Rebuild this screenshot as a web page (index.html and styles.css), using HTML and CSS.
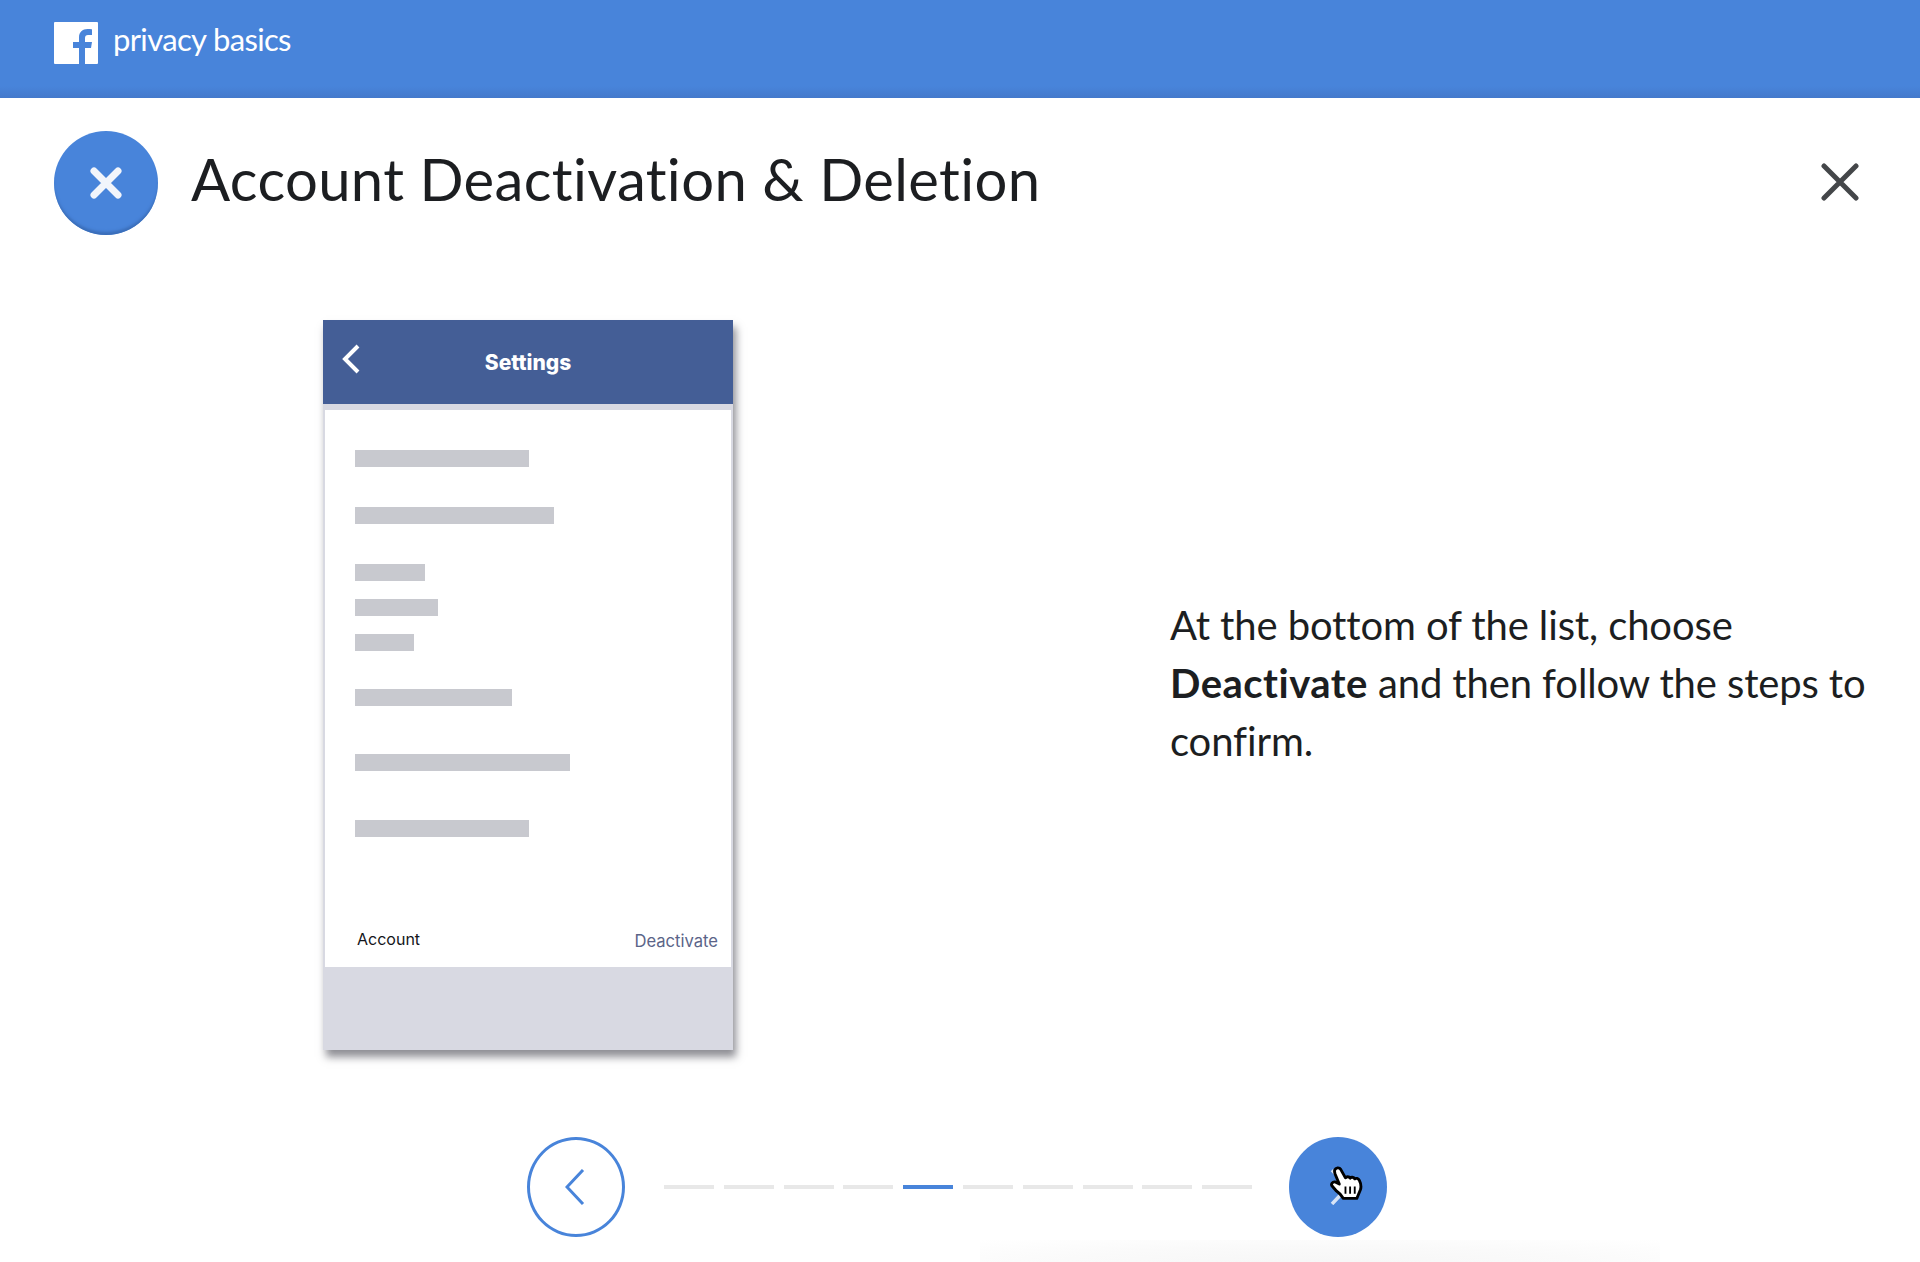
FILE: index.html
```html
<!DOCTYPE html>
<html lang="en">
<head>
<meta charset="utf-8">
<title>Privacy Basics</title>
<link rel="stylesheet" href="styles.css">
</head>
<body>
<div class="page">
  <header class="topbar">
    <svg class="logo" viewBox="0 0 44 42" aria-hidden="true"><path fill="#fff" fill-rule="evenodd" d="M1 0h42a1 1 0 0 1 1 1v40a1 1 0 0 1-1 1H1a1 1 0 0 1-1-1V1a1 1 0 0 1 1-1zM31 42V26h6l1-6h-7v-4c0-2 1-3 3-3h4V7.300c-1-.1-2.500-.3-4.500-.3-5 0-8.500 3-8.500 8.500V20h-6v6h6v16z"/></svg>
    <span class="brand">privacy basics</span>
  </header>

  <section class="title-row">
    <div class="badge">
      <svg class="badge-x" viewBox="0 0 34 34" aria-hidden="true"><path d="M5 5l24 24M29 5L5 29"/></svg>
    </div>
    <h1 class="title">Account Deactivation &amp; Deletion</h1>
    <svg class="close" viewBox="0 0 38 38" aria-hidden="true"><path d="M3 3l32 32M35 3L3 35"/></svg>
  </section>

  <main class="stage">
    <div class="phone">
      <div class="phone-head">
        <svg class="phone-back" viewBox="0 0 18 30" aria-hidden="true"><path d="M16 2L3 15l13 13"/></svg>
        <span class="phone-title">Settings</span>
      </div>
      <div class="phone-body">
        <div class="bar bar-a"></div>
        <div class="bar bar-b"></div>
        <div class="bar bar-c"></div>
        <div class="bar bar-d"></div>
        <div class="bar bar-e"></div>
        <div class="bar bar-f"></div>
        <div class="bar bar-g"></div>
        <div class="bar bar-h"></div>
        <div class="phone-row">
          <span class="row-label">Account</span>
          <span class="row-action">Deactivate</span>
        </div>
      </div>
      <div class="phone-foot"></div>
    </div>
    <p class="copy">At the bottom of the list, choose<br><strong>Deactivate</strong> and then follow the steps to<br>confirm.</p>
  </main>

  <nav class="pager">
    <button class="round round-prev" type="button" aria-label="Previous">
      <svg class="chev" viewBox="0 0 20 36" aria-hidden="true"><path d="M18 1L2 18l16 17"/></svg>
    </button>
    <div class="dashes">
      <span class="dash"></span><span class="dash"></span><span class="dash"></span><span class="dash"></span>
      <span class="dash dash-on"></span>
      <span class="dash"></span><span class="dash"></span><span class="dash"></span><span class="dash"></span><span class="dash"></span>
    </div>
    <button class="round round-next" type="button" aria-label="Next">
      <svg class="chev chev-next" viewBox="0 0 20 36" aria-hidden="true"><path d="M2 1l16 17L2 35"/></svg>
      <svg class="hand" viewBox="0 0 32 34" aria-hidden="true">
        <path class="hand-fill" d="M4.500 4C5.500 1.500 9 1 10.500 3.500L15 11.500C16 10 18.500 10 19.500 11.800C20.500 10.500 23 10.500 24 12.500C25 11.500 27.500 12 28.500 14C30 17 30.500 20 29.500 23L26 31.500H13C11.500 29 9 26 6 24L2 19.500C.5 17.500 2.500 15 5 15.500L9 17.500L5 8C4.500 6.500 4.200 5 4.500 4z"/>
        <path class="hand-lines" d="M15 20v7M19.500 20v7M24 20v7"/>
      </svg>
    </button>
  </nav>
  <div class="floor-shade"></div>
</div>
</body>
</html>
```

FILE: styles.css
```css
* { box-sizing: border-box; }
html, body { margin: 0; padding: 0; background: #fff; }
.page {
  position: relative;
  width: 1920px;
  height: 1262px;
  overflow: hidden;
  background: #fff;
  color: #1c1e21;
  font-family: Lato, "Open Sans", sans-serif;
  font-variant-ligatures: none;
}

.topbar {
  height: 98px;
  background: linear-gradient(#4884da 0, #4884da 88%, #4479cb 100%);
  display: flex;
  align-items: flex-start;
  padding: 22px 0 0 54px;
}
.logo { width: 44px; height: 42px; display: block; }
.brand {
  margin-left: 15px;
  margin-top: -3px;
  color: #fff;
  font-size: 31px;
  line-height: 40px;
  letter-spacing: -0.65px;
}

.title-row {
  display: flex;
  align-items: center;
  height: 104px;
  margin-top: 33px;
  padding: 0 61px 0 54px;
}
.badge {
  width: 104px;
  height: 104px;
  border-radius: 50%;
  background: #4884da;
  box-shadow: inset 0 -4px 3px -1px #3a6db8;
  display: flex;
  align-items: center;
  justify-content: center;
  flex: none;
}
.badge-x { width: 34px; height: 34px; margin-bottom: 1px; }
.badge-x path { fill: none; stroke: #f2f5fb; stroke-width: 7px; stroke-linecap: round; }
.title {
  flex: 1;
  margin: -9px 0 0 33px;
  font-size: 58px;
  line-height: 70px;
  font-weight: 400;
  letter-spacing: 0.36px;
  color: #1c1e21;
}
.close { width: 38px; height: 38px; flex: none; margin-bottom: 2px; }
.close path { fill: none; stroke: #444649; stroke-width: 5px; stroke-linecap: round; }

.stage {
  display: flex;
  align-items: flex-start;
  padding: 85px 0 0 323px;
}
.phone {
  width: 410px;
  height: 730px;
  display: flex;
  flex-direction: column;
  background: #d8d9e2;
  box-shadow: 3px 7px 8px rgba(50, 50, 60, 0.55);
  flex: none;
}
.phone-head {
  position: relative;
  height: 84px;
  background: #445e96;
  display: flex;
  align-items: center;
  justify-content: center;
  flex: none;
}
.phone-back {
  position: absolute;
  left: 19px;
  top: 24px;
  width: 18px;
  height: 30px;
}
.phone-back path { fill: none; stroke: #fff; stroke-width: 4px; }
.phone-title {
  color: #fff;
  font-family: Inter, "Liberation Sans", sans-serif;
  font-size: 21px;
  font-weight: 800;
}
.phone-body {
  margin: 6px 2px 0;
  height: 557px;
  padding: 41px 13px 0 30px;
  background: #fff;
  display: flex;
  flex-direction: column;
  flex: none;
}
.phone-foot { flex: 1; }
.bar { height: 17px; background: #c8c9cf; flex: none; }
.bar-a { width: 174px; margin-top: -1px; }
.bar-b { width: 199px; margin-top: 40px; }
.bar-c { width: 70px; margin-top: 40px; }
.bar-d { width: 83px; margin-top: 18px; }
.bar-e { width: 59px; margin-top: 18px; }
.bar-f { width: 157px; margin-top: 38px; }
.bar-g { width: 215px; margin-top: 48px; }
.bar-h { width: 174px; margin-top: 49px; }
.phone-row {
  margin-top: 92px;
  display: flex;
  justify-content: space-between;
  align-items: flex-start;
  padding-left: 2px;
  font-family: Inter, "Liberation Sans", sans-serif;
  font-size: 16px;
  line-height: 20px;
}
.row-label { color: #14151a; }
.row-action { color: #5b6488; margin-top: 2px; font-size: 16.600px; }

.copy {
  margin: 276px 0 0 437px;
  font-size: 40px;
  line-height: 58px;
  letter-spacing: -0.12px;
  color: #1c1e21;
  white-space: nowrap;
}
.copy strong { font-weight: 700; letter-spacing: 0.5px; }

.pager {
  display: flex;
  align-items: center;
  margin-top: 87px;
  padding-left: 527px;
  height: 100px;
}
.round {
  position: relative;
  width: 98px;
  height: 100px;
  padding: 0;
  border-radius: 50%;
  display: flex;
  align-items: center;
  justify-content: center;
  flex: none;
}
.round-prev { background: #fff; border: 3px solid #4884da; }
.round-next { background: #4884da; border: 0; }
.chev { width: 20px; height: 36px; }
.chev path { fill: none; stroke: #4884da; stroke-width: 3px; }
.round-prev .chev { margin-right: 2px; }
.chev-next { margin-left: 4px; }
.chev-next path { stroke: #d8e4f6; stroke-width: 3.500px; }
.hand {
  position: absolute;
  left: 41px;
  top: 29px;
  width: 33px;
  height: 35px;
}
.hand-fill { fill: #fff; stroke: #000; stroke-width: 2.800px; stroke-linejoin: round; }
.hand-lines { fill: none; stroke: #000; stroke-width: 1.800px; }
.dashes {
  display: flex;
  gap: 9.800px;
  margin: 0 37px 0 39px;
}
.dash { width: 50px; height: 4px; background: #e8e8e8; flex: none; }
.dash-on { background: #4884da; }

.floor-shade {
  position: absolute;
  left: 980px;
  top: 1240px;
  width: 680px;
  height: 50px;
  background: radial-gradient(ellipse at center, #f6f6f6 0, #fafafa 55%, #ffffff 100%);
}
```
